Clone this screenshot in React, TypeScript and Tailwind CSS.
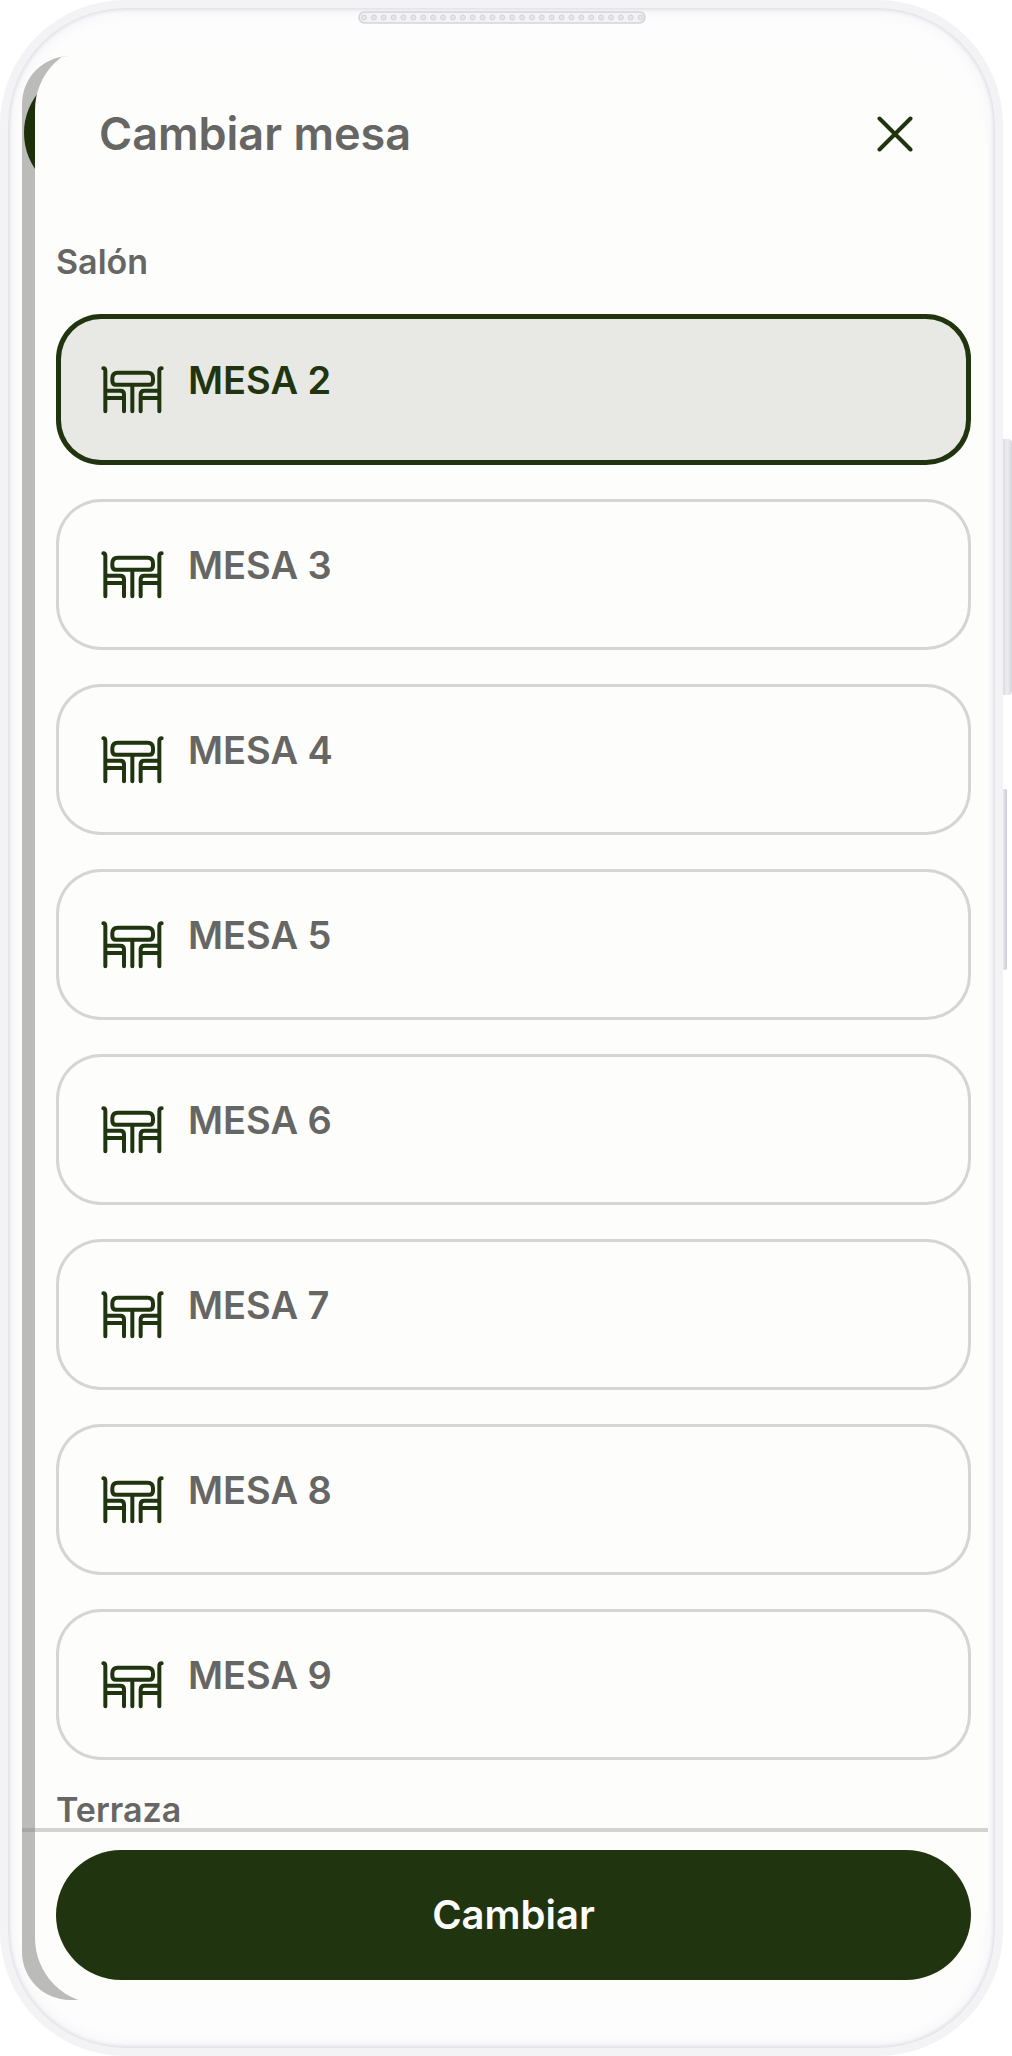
import { useState } from 'react'

interface Area {
  name: string
  tables: string[]
}

const AREAS: Area[] = [
  {
    name: 'Salón',
    tables: ['MESA 2', 'MESA 3', 'MESA 4', 'MESA 5', 'MESA 6', 'MESA 7', 'MESA 8', 'MESA 9'],
  },
  { name: 'Terraza', tables: [] },
]

const SPEAKER_HOLES = Array.from({ length: 29 }, (_, i) => 6 + i * 9.88)

function TableIcon() {
  return (
    <svg
      viewBox="33 36 189 144"
      className="mt-[6px] h-12 w-[63px] shrink-0"
      fill="none"
      stroke="#20350f"
      strokeWidth="12"
      strokeLinecap="round"
      strokeLinejoin="round"
      aria-hidden
    >
      <path d="M40 43Q46 43 46 52V172M46 110H91Q102 110 102 121V172M46 132H102" />
      <path d="M215 43Q208 43 208 52V172M208 110H163Q152 110 152 121V172M208 132H152" />
      <path d="M83 56H173Q189 56 189 73V80Q189 92 178 92H78Q67 92 67 80V73Q67 56 83 56ZM127 92V172" />
    </svg>
  )
}

function CloseIcon() {
  return (
    <svg viewBox="0 0 36 36" className="size-9" stroke="#20350f" strokeWidth="4" strokeLinecap="round" aria-hidden>
      <path d="M2.5 2.5L33.5 33.5M33.5 2.5L2.5 33.5" />
    </svg>
  )
}

function Speaker() {
  return (
    <svg viewBox="0 0 288 13" className="mx-auto mt-[3px] block h-[13px] w-[288px]" aria-hidden>
      <rect x="1" y="1" width="286" height="11" rx="5.5" fill="#f3f3f6" stroke="#d3d3da" strokeWidth="1.5" />
      {SPEAKER_HOLES.map((x) => (
        <circle key={x} cx={x} cy="6.5" r="2.5" fill="#e4e4e9" stroke="#d3d3d9" />
      ))}
    </svg>
  )
}

function TableOption({ name, checked, onSelect }: { name: string; checked: boolean; onSelect: () => void }) {
  return (
    <label
      className={`relative flex h-[151px] cursor-pointer items-start gap-6 rounded-[45px] pt-[46px] pl-[45px] ring-inset ${
        checked ? 'bg-[#e8e9e4] text-[#20350f] ring-[5px] ring-[#20350f]' : 'text-[#666664] ring-[3px] ring-[#d5d5d3]'
      }`}
    >
      <input type="radio" name="mesa" value={name} checked={checked} onChange={onSelect} className="sr-only" />
      <TableIcon />
      <span className="text-[38px] leading-10 font-semibold">{name}</span>
    </label>
  )
}

export default function App() {
  const [selected, setSelected] = useState('MESA 2')

  return (
    <div className="flex min-h-screen bg-white font-['Inter','Liberation_Sans',sans-serif]">
      <div className="flex min-w-0 flex-1 flex-col rounded-[125px] border-8 border-[#f3f3f6] bg-[#fdfdfd] shadow-[inset_0_0_4px_1px_#d6d6df,inset_0_0_16px_2px_#f2f2f6]">
        <Speaker />

        <div className="relative mt-8 mr-[7px] mb-12 ml-[14px] flex flex-1 flex-col overflow-hidden rounded-l-[48px] rounded-r-[100px] bg-linear-to-r from-[#bbbbb9] from-50% to-[#fdfdfc] to-50%">
          <div className="absolute top-[13px] left-[2px] size-32 rounded-full bg-[#1b300b]" />

          {/* the sheet runs past the screen at both ends, so its corners get cut by the edge */}
          <div
            role="dialog"
            aria-labelledby="dialog-title"
            className="relative -mt-3 -mb-1 ml-[13px] flex flex-1 flex-col rounded-l-[66px] bg-[#fdfdfc]"
          >
            <header className="flex items-center justify-between pt-[60px] pr-[75px] pl-16">
              <h1 id="dialog-title" className="text-[45px] leading-[60px] font-semibold text-[#666664]">
                Cambiar mesa
              </h1>
              <button type="button" aria-label="Cerrar">
                <CloseIcon />
              </button>
            </header>

            <main className="flex flex-1 flex-col gap-8 pt-20 pr-[17px] pl-[21px]">
              {AREAS.map((area) => (
                <section key={area.name} className="flex flex-col gap-[34px]">
                  <h2 className="text-[34px] leading-9 font-semibold text-[#666664]">{area.name}</h2>
                  {area.tables.map((name) => (
                    <TableOption
                      key={name}
                      name={name}
                      checked={name === selected}
                      onSelect={() => setSelected(name)}
                    />
                  ))}
                </section>
              ))}
            </main>

            <footer className="relative border-t-4 border-[#d3d3d1] pt-[18px] pr-[17px] pb-6 pl-[21px] before:absolute before:-top-1 before:-left-[13px] before:h-1 before:w-[13px] before:bg-[#a8a8a6]">
              <button
                type="button"
                className="h-[130px] w-full rounded-full bg-[#20350f] text-[40px] leading-10 font-semibold text-[#fdfdfc]"
              >
                Cambiar
              </button>
            </footer>
          </div>
        </div>
      </div>

      <div className="flex w-[9px] shrink-0 flex-col items-start pt-[439px]">
        <div className="h-64 w-[9px] rounded-r-[4px] bg-linear-to-r from-[#dcdce2] via-[#ececf0] to-[#d5d5dc]" />
        <div className="mt-[94px] h-[181px] w-1 rounded-r-[2px] bg-linear-to-r from-[#e9e9ee] to-[#c9c9d2]" />
      </div>
    </div>
  )
}
